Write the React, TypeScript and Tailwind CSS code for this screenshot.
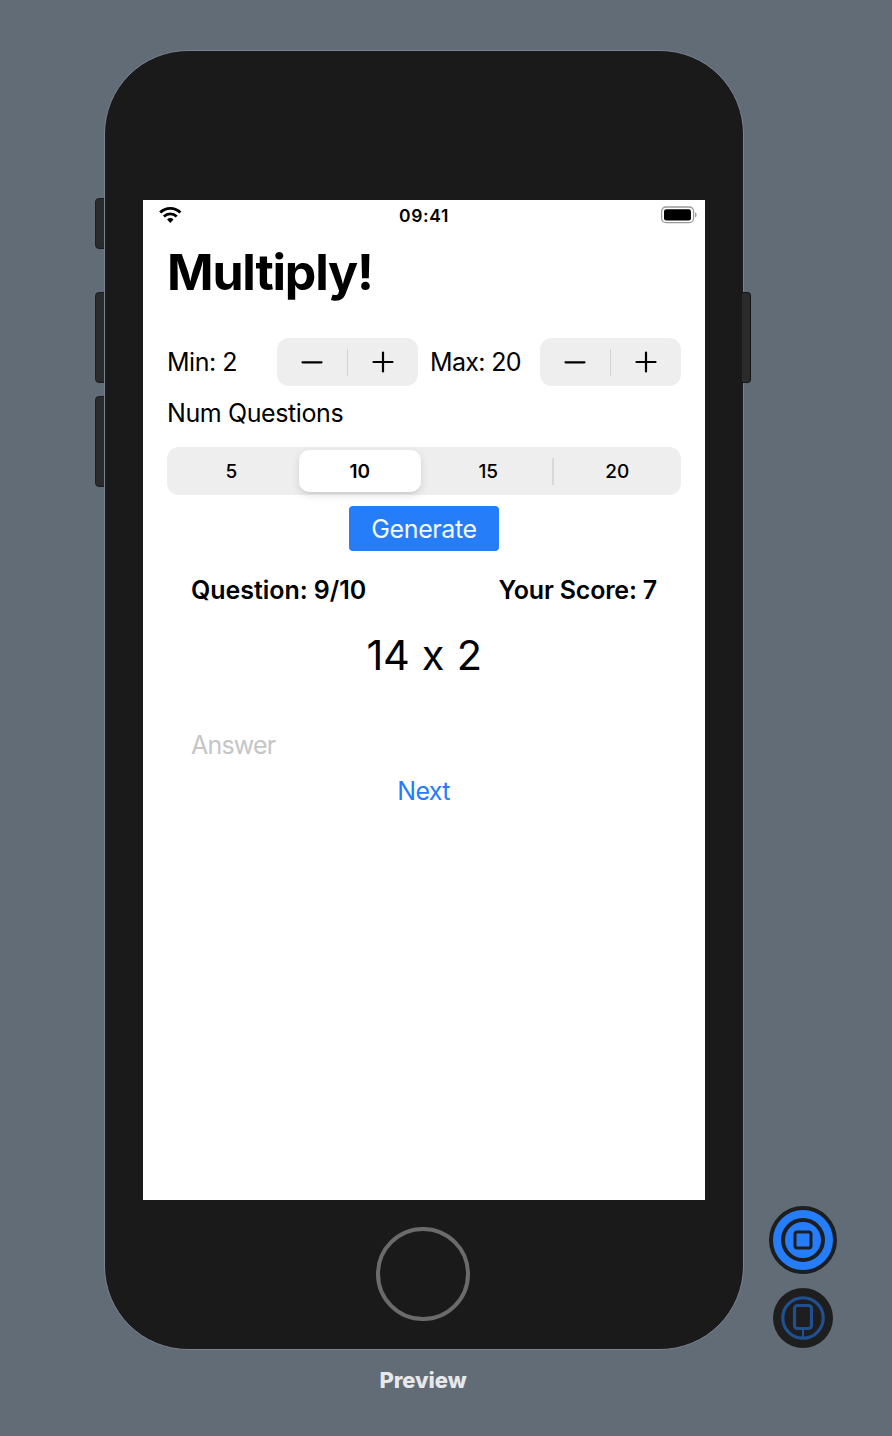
import React from "react";

const SEGMENTS = ["5", "10", "15", "20"];

function WifiIcon() {
  return (
    <svg width="24" height="18" viewBox="0 0 24 18" fill="none" stroke="#000" strokeWidth="2.9">
      <path d="M2.2 6.6a14.2 14.2 0 0 1 20.2 0" />
      <path d="M5.9 10.5a9.2 9.2 0 0 1 12.8 0" />
      <path d="M9.1 13.4a4.6 4.6 0 0 1 6.4 0L12.3 16.9z" fill="#000" stroke="none" />
    </svg>
  );
}

function BatteryIcon() {
  return (
    <svg width="37" height="18" viewBox="0 0 37 18" fill="none">
      <rect x="1.6" y="1" width="32" height="15.6" rx="4.4" stroke="#999" strokeWidth="1.3" />
      <rect x="4" y="3.2" width="27" height="11.2" rx="2.2" fill="#000" />
      <path d="M35.2 6.2c1.8.9 1.8 4.3 0 5.2z" fill="#8f8f8f" />
    </svg>
  );
}

function Stepper() {
  return (
    <div className="flex h-12 w-[141px] items-center rounded-xl bg-[#eeeeee]">
      <button className="flex flex-1 justify-center" aria-label="Decrease">
        <svg width="24" height="24" viewBox="0 0 24 24" stroke="#000" strokeWidth="2.2" strokeLinecap="round">
          <path d="M2.5 12.3h19" />
        </svg>
      </button>
      <div className="h-[27px] w-px bg-[#d3d3d3]" />
      <button className="flex flex-1 justify-center" aria-label="Increase">
        <svg width="24" height="24" viewBox="0 0 24 24" stroke="#000" strokeWidth="2.2" strokeLinecap="round">
          <path d="M2.5 12h19M12 2.5v19" />
        </svg>
      </button>
    </div>
  );
}

function SegmentedControl() {
  return (
    <div className="flex h-12 items-center rounded-xl bg-[#eeeeee] text-[19px] font-medium leading-6">
      {SEGMENTS.map((label) =>
        label === "10" ? (
          <div key={label} className="flex flex-1 justify-center">
            <div className="flex h-[42px] w-[122px] items-center justify-center rounded-[10px] bg-white pt-px font-semibold shadow-[0_3px_8px_rgba(0,0,0,0.12),0_2px_1px_rgba(0,0,0,0.04)]">
              {label}
            </div>
          </div>
        ) : (
          <div key={label} className="flex flex-1 items-center">
            {label === "20" && <div className="-ml-px h-[27px] w-0.5 bg-[#d8d8d8]" />}
            <span className="flex-1 pt-0.5 text-center">{label}</span>
          </div>
        )
      )}
    </div>
  );
}

function AppScreen() {
  return (
    <div className="flex h-[1000px] w-[562px] flex-col bg-white text-[25px] leading-[30px] text-black">
      <div className="flex h-[30px] items-center justify-between pl-[15px] pr-[8px]">
        <div className="w-[53px]"><WifiIcon /></div>
        <span className="pt-0.5 pr-[7px] text-[17.5px] font-semibold leading-[28px] tracking-[0.6px]">09:41</span>
        <div className="flex w-[53px] justify-end"><BatteryIcon /></div>
      </div>
      <div className="flex flex-col px-6">
        <h1 className="mt-[12px] text-[50px] font-bold leading-[60px] tracking-[-1.2px]">Multiply!</h1>
        <div className="mt-[36px] flex items-center">
          <span className="w-[110px] tracking-[-0.5px]">Min: 2</span>
          <Stepper />
          <span className="w-[122px] pl-3 tracking-[-0.65px]">Max: 20</span>
          <Stepper />
        </div>
        <div className="mt-[12px] tracking-[-0.4px]">Num Questions</div>
        <div className="mt-[19px]"><SegmentedControl /></div>
        <button className="mt-[11px] h-[45px] w-[150px] self-center rounded bg-[#257dfa] tracking-[-0.4px] text-[#f4f9ff]">
          Generate
        </button>
        <div className="mt-[24px] flex justify-between px-6 font-semibold">
          <span className="tracking-[-0.05px]">Question: 9/10</span>
          <span className="tracking-[-0.2px]">Your Score: 7</span>
        </div>
        <div className="mt-[25px] text-center text-[41.5px] leading-[50px] tracking-[-0.5px] [word-spacing:1.5px]">14 x 2</div>
        <div className="mt-[50px] px-6 tracking-[-0.8px] text-[#c5c5c7]">Answer</div>
        <button className="mt-[16px] self-center pr-px tracking-[-0.7px] text-[#257dfa]">Next</button>
      </div>
    </div>
  );
}

export default function App() {
  return (
    <div className="relative h-[1436px] w-[892px] overflow-hidden bg-[#626c77] pt-[50px] font-['Inter',sans-serif] [font-feature-settings:'calt'_0]">
      <div className="relative ml-[104px] h-[1300px] w-[640px]">
        <div className="absolute left-[-9px] top-[148px] h-[51px] w-[14px] rounded-[4px] border border-[#1d1e20] bg-[#2b2b2b]" />
        <div className="absolute left-[-9px] top-[242px] h-[91px] w-[14px] rounded-[4px] border border-[#1d1e20] bg-[#2b2b2b]" />
        <div className="absolute left-[-9px] top-[346px] h-[91px] w-[14px] rounded-[4px] border border-[#1d1e20] bg-[#2b2b2b]" />
        <div className="relative flex h-full w-full flex-col rounded-[84px] border border-[#7b8391] bg-[#1a1a1a] pl-[38px] pt-[149px]">
          <AppScreen />
          <div className="ml-[233px] mt-[27px] h-[94px] w-[94px] rounded-full border-4 border-[#6b6b6b]" />
        </div>
        <div className="absolute right-[-7px] top-[242px] h-[91px] w-[9px] rounded-r-[4px] border border-l-0 border-[#141414] bg-[#2b2b2b]" />
      </div>
      <div className="ml-[104px] mt-[16px] w-[638px] text-center text-[22px] font-extrabold leading-7 tracking-[-0.05px] text-[#e6e8ea]">Preview</div>
      <div className="absolute left-[768px] top-[1205px] flex flex-col items-center gap-3">
        <svg width="70" height="70" viewBox="0 0 70 70" fill="none" stroke="#1d1e20">
          <circle cx="35" cy="35" r="32" fill="#257dfa" strokeWidth="4" />
          <circle cx="35" cy="35" r="20" strokeWidth="4" />
          <rect x="27" y="27" width="16" height="16" rx="2.2" strokeWidth="3" />
        </svg>
        <svg width="62" height="62" viewBox="0 0 62 62" fill="none" stroke="#20508f">
          <circle cx="31" cy="31" r="30" fill="#1e1e1e" stroke="none" />
          <circle cx="31" cy="31" r="20.2" strokeWidth="3.2" />
          <rect x="22.5" y="18.5" width="17" height="23" rx="3" strokeWidth="3.2" />
          <path d="M31 43v8" strokeWidth="2" />
        </svg>
      </div>
    </div>
  );
}
